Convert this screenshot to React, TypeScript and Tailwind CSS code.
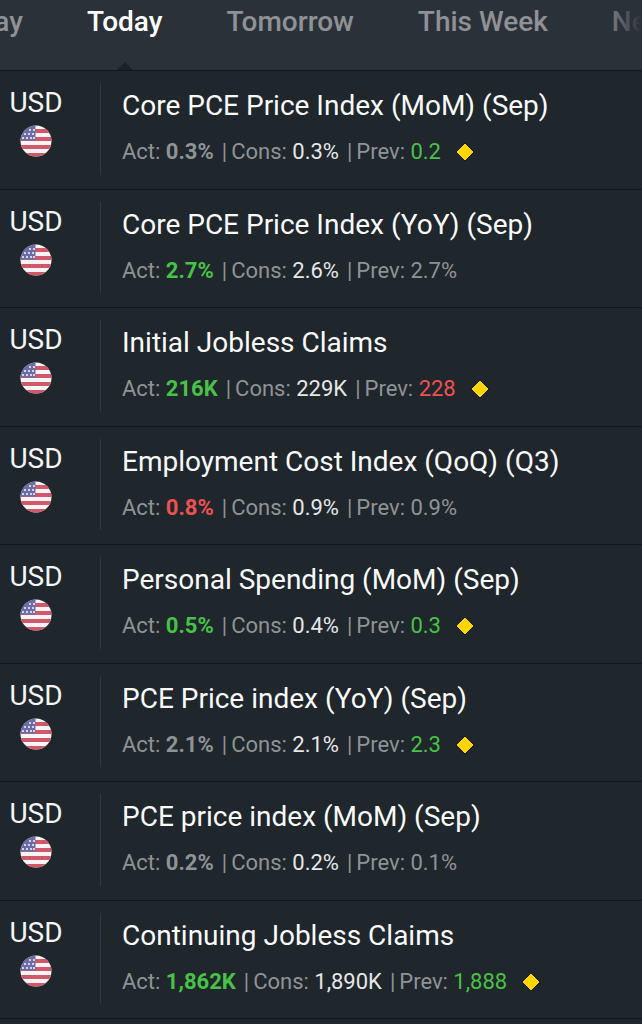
import { clsx } from "clsx";

type Tone = "up" | "down" | "flat";

type CalendarEvent = {
  title: string;
  act: string;
  actTone: Tone;
  cons: string;
  prev: string;
  prevTone: Tone;
  revised?: boolean;
};

const TABS = ["Yesterday", "Today", "Tomorrow", "This Week", "Next Week"];

const EVENTS: CalendarEvent[] = [
  { title: "Core PCE Price Index (MoM) (Sep)", act: "0.3%", actTone: "flat", cons: "0.3%", prev: "0.2", prevTone: "up", revised: true },
  { title: "Core PCE Price Index (YoY) (Sep)", act: "2.7%", actTone: "up", cons: "2.6%", prev: "2.7%", prevTone: "flat" },
  { title: "Initial Jobless Claims", act: "216K", actTone: "up", cons: "229K", prev: "228", prevTone: "down", revised: true },
  { title: "Employment Cost Index (QoQ) (Q3)", act: "0.8%", actTone: "down", cons: "0.9%", prev: "0.9%", prevTone: "flat" },
  { title: "Personal Spending (MoM) (Sep)", act: "0.5%", actTone: "up", cons: "0.4%", prev: "0.3", prevTone: "up", revised: true },
  { title: "PCE Price index (YoY) (Sep)", act: "2.1%", actTone: "flat", cons: "2.1%", prev: "2.3", prevTone: "up", revised: true },
  { title: "PCE price index (MoM) (Sep)", act: "0.2%", actTone: "flat", cons: "0.2%", prev: "0.1%", prevTone: "flat" },
  { title: "Continuing Jobless Claims", act: "1,862K", actTone: "up", cons: "1,890K", prev: "1,888", prevTone: "up", revised: true },
];

const toneClass: Record<Tone, string> = {
  up: "text-[#48c246]",
  down: "text-[#ef5150]",
  flat: "text-[#909396]",
};

const STARS = [
  [10, 5], [14, 5],
  [5, 9], [9, 9], [13, 9],
  [3, 13], [7, 13], [11, 13], [14, 13],
];

const UsFlag = () => (
  <svg viewBox="0 0 32 32" className="size-8" role="img" aria-label="United States">
    <defs>
      <clipPath id="flag-circle">
        <circle cx="16" cy="16" r="15.5" />
      </clipPath>
    </defs>
    <g clipPath="url(#flag-circle)">
      <rect width="32" height="32" fill="#f8f4f6" />
      {[4, 12, 20, 28].map((y) => (
        <rect key={y} y={y} width="32" height="4" fill="#cf5968" />
      ))}
      <rect width="15.5" height="15.5" fill="#6c6ca6" />
      {STARS.map(([x, y]) => (
        <circle key={`${x}-${y}`} cx={x} cy={y} r="1.1" fill="#eeeefa" />
      ))}
    </g>
  </svg>
);

const Diamond = () => (
  <svg viewBox="0 0 20 20" className="ml-[14px] size-5" role="img" aria-label="Revised">
    <path d="M10 1 19 10 10 19 1 10Z" fill="#ffd500" stroke="#15191b" strokeWidth="1" />
  </svg>
);

const Tabs = () => (
  <nav className="relative h-[71px] overflow-hidden border-b border-[#11171c] bg-[#2b3139]">
    <div className="-ml-[101px] flex h-full gap-16">
      {TABS.map((tab) => (
        <button
          key={tab}
          className={clsx(
            "relative flex h-full shrink-0 cursor-pointer items-start pt-[6px] text-[28px] leading-8 font-medium",
            tab === "Today" ? "text-white" : "text-[#8f9194]"
          )}
        >
          {tab}
          {tab === "Today" && (
            <svg viewBox="0 0 16 8" className="absolute bottom-0 left-1/2 h-2 w-4 -translate-x-1/2">
              <path d="M0 8 8 0 16 8Z" fill="#1a2127" />
            </svg>
          )}
        </button>
      ))}
    </div>
    <div className="pointer-events-none absolute inset-y-0 right-0 w-10 bg-linear-to-r from-transparent to-[#2b3139]" />
  </nav>
);

const EventRow = ({ event }: { event: CalendarEvent }) => (
  <li className="flex border-b border-[#12181d] odd:h-[119px] even:h-[118px]">
    <div className="flex w-[72px] shrink-0 flex-col items-center pt-4">
      <span className="text-[28px] leading-8 text-[#f4f5f6]">USD</span>
      <span className="mt-[6px]">
        <UsFlag />
      </span>
    </div>
    <div className="mt-3 mb-[14px] ml-7 w-px shrink-0 bg-[#303840]" />
    <div className="ml-[21px] min-w-0 pt-[19px]">
      <h2 className="text-[28px] leading-8 whitespace-nowrap text-[#fafafa]">{event.title}</h2>
      <p className="mt-4 flex items-center text-[22px] leading-7 whitespace-nowrap text-[#909396]">
        <span>Act:&nbsp;</span>
        <span className={clsx("font-bold", toneClass[event.actTone])}>{event.act}</span>
        <span className="ml-2">|</span>
        <span className="ml-1">Cons:&nbsp;</span>
        <span className="text-[#e6e7e8]">{event.cons}</span>
        <span className="ml-2">|</span>
        <span className="ml-1">Prev:&nbsp;</span>
        <span className={toneClass[event.prevTone]}>{event.prev}</span>
        {event.revised && <Diamond />}
      </p>
    </div>
  </li>
);

export default function App() {
  return (
    <main className="min-h-screen overflow-hidden bg-[#1f262c] font-['Roboto',sans-serif]">
      <Tabs />
      <ul>
        {EVENTS.map((event) => (
          <EventRow key={event.title} event={event} />
        ))}
      </ul>
    </main>
  );
}
